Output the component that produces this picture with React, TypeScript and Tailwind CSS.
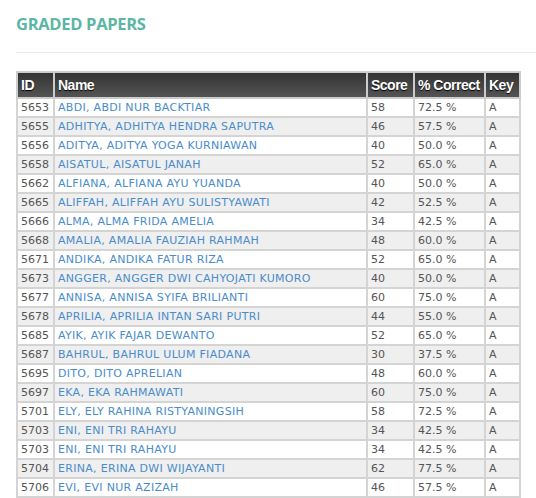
const rows: [string, string, number, string][] = [
  ["5653", "ABDI, ABDI NUR BACKTIAR", 58, "72.5 %"],
  ["5655", "ADHITYA, ADHITYA HENDRA SAPUTRA", 46, "57.5 %"],
  ["5656", "ADITYA, ADITYA YOGA KURNIAWAN", 40, "50.0 %"],
  ["5658", "AISATUL, AISATUL JANAH", 52, "65.0 %"],
  ["5662", "ALFIANA, ALFIANA AYU YUANDA", 40, "50.0 %"],
  ["5665", "ALIFFAH, ALIFFAH AYU SULISTYAWATI", 42, "52.5 %"],
  ["5666", "ALMA, ALMA FRIDA AMELIA", 34, "42.5 %"],
  ["5668", "AMALIA, AMALIA FAUZIAH RAHMAH", 48, "60.0 %"],
  ["5671", "ANDIKA, ANDIKA FATUR RIZA", 52, "65.0 %"],
  ["5673", "ANGGER, ANGGER DWI CAHYOJATI KUMORO", 40, "50.0 %"],
  ["5677", "ANNISA, ANNISA SYIFA BRILIANTI", 60, "75.0 %"],
  ["5678", "APRILIA, APRILIA INTAN SARI PUTRI", 44, "55.0 %"],
  ["5685", "AYIK, AYIK FAJAR DEWANTO", 52, "65.0 %"],
  ["5687", "BAHRUL, BAHRUL ULUM FIADANA", 30, "37.5 %"],
  ["5695", "DITO, DITO APRELIAN", 48, "60.0 %"],
  ["5697", "EKA, EKA RAHMAWATI", 60, "75.0 %"],
  ["5701", "ELY, ELY RAHINA RISTYANINGSIH", 58, "72.5 %"],
  ["5703", "ENI, ENI TRI RAHAYU", 34, "42.5 %"],
  ["5703", "ENI, ENI TRI RAHAYU", 34, "42.5 %"],
  ["5704", "ERINA, ERINA DWI WIJAYANTI", 62, "77.5 %"],
  ["5706", "EVI, EVI NUR AZIZAH", 46, "57.5 %"],
];

const th = "border-2 border-[#ccc] h-[26px] px-[3px] py-0 text-left whitespace-nowrap font-bold text-[14px] tracking-[-0.5px] font-['Liberation_Sans',Arial,sans-serif]";
const td = "border-2 border-[#d4d4d4] h-[19px] px-[3px] py-0 leading-[15px] whitespace-nowrap";

export default function App() {
  return (
    <div className="w-[536px] h-[498px] overflow-hidden bg-white pl-4">
      <h2 className="mt-[13px] text-[16.5px] leading-[22px] tracking-[-0.3px] font-bold text-[#5bb6a3] font-['Open_Sans',sans-serif]">
        GRADED PAPERS
      </h2>
      <div className="mt-[17px] h-px bg-[#ebebeb]" />
      <table className="mt-[18px] w-[503px] table-fixed border-collapse font-['DejaVu_Sans',Verdana,sans-serif] text-[11px] text-[#555]">
        <colgroup>
          <col className="w-[37px]" />
          <col className="w-[313px]" />
          <col className="w-[47px]" />
          <col className="w-[71px]" />
          <col className="w-[35px]" />
        </colgroup>
        <thead>
          <tr className="bg-gradient-to-b from-[#333] to-[#555] text-white [text-shadow:0_1px_1px_#000]">
            <th className={th}>ID</th>
            <th className={th}>Name</th>
            <th className={th}>Score</th>
            <th className={th}>% Correct</th>
            <th className={th}>Key</th>
          </tr>
        </thead>
        <tbody>
          {rows.map((r, i) => (
            <tr key={i} className={i % 2 === 1 ? "bg-[#efefef]" : "bg-white"}>
              <td className={td}>{r[0]}</td>
              <td className={td}>
                <a href="#" className="text-[#4a8ccb] tracking-[0.3px]">{r[1]}</a>
              </td>
              <td className={td}>{r[2]}</td>
              <td className={td}>{r[3]}</td>
              <td className={td}>A</td>
            </tr>
          ))}
        </tbody>
      </table>
    </div>
  );
}
